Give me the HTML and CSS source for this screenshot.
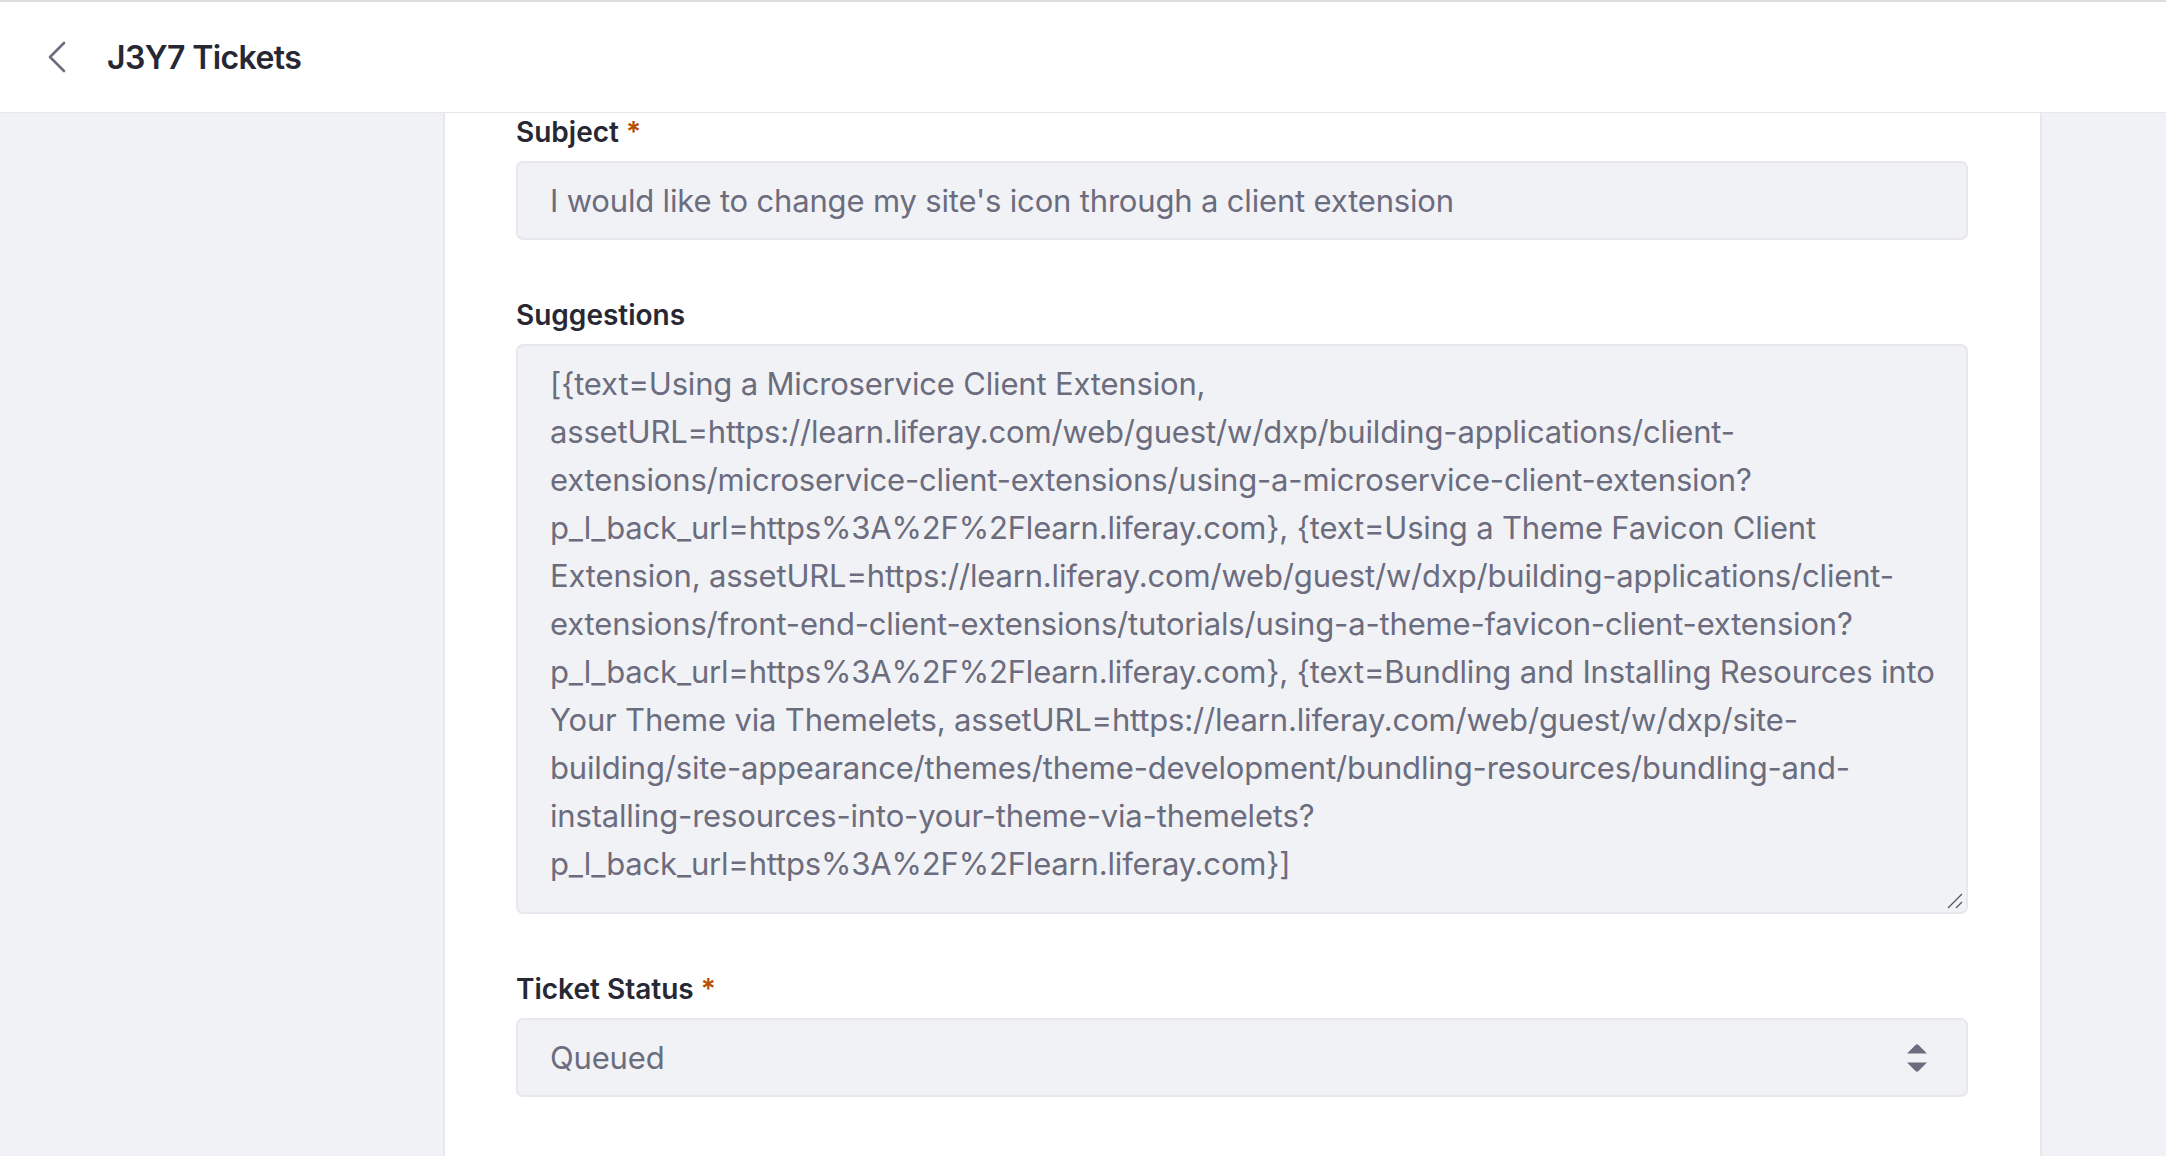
FILE: index.html
```html
<!DOCTYPE html>
<html lang="en">
<head>
<meta charset="utf-8">
<title>J3Y7 Tickets</title>
<link rel="stylesheet" href="styles.css">
</head>
<body>
<header class="topbar">
  <button class="back" aria-label="Back">
    <svg width="22" height="32" viewBox="0 0 22 32"><path d="M18 2 L4 16 L18 30" fill="none" stroke="#6b6c7e" stroke-width="2.6" stroke-linecap="round" stroke-linejoin="round"/></svg>
  </button>
  <h1 class="title">J3Y7 Tickets</h1>
</header>
<main class="layout">
  <div class="side"></div>
  <section class="card">
    <div class="form-group">
      <label class="label">Subject <span class="req">*</span></label>
      <div class="field">I would like to change my site's icon through a client extension</div>
    </div>
    <div class="form-group">
      <label class="label">Suggestions</label>
      <div class="field area">[{text=Using a Microservice Client Extension,<br>assetURL=https://learn.liferay.com/web/guest/w/dxp/building-applications/client-<br>extensions/microservice-client-extensions/using-a-microservice-client-extension?<br>p_l_back_url=https%3A%2F%2Flearn.liferay.com}, {text=Using a Theme Favicon Client<br>Extension, assetURL=https://learn.liferay.com/web/guest/w/dxp/building-applications/client-<br>extensions/front-end-client-extensions/tutorials/using-a-theme-favicon-client-extension?<br>p_l_back_url=https%3A%2F%2Flearn.liferay.com}, {text=Bundling and Installing Resources into<br>Your Theme via Themelets, assetURL=https://learn.liferay.com/web/guest/w/dxp/site-<br>building/site-appearance/themes/theme-development/bundling-resources/bundling-and-<br>installing-resources-into-your-theme-via-themelets?<br>p_l_back_url=https%3A%2F%2Flearn.liferay.com}]<svg class="grip" width="16" height="16" viewBox="0 0 16 16"><path d="M1 15 L15 1 M9 15 L15 9" stroke="#55565f" stroke-width="1.3" fill="none"/></svg></div>
    </div>
    <div class="form-group">
      <label class="label">Ticket Status <span class="req">*</span></label>
      <div class="field select">Queued<svg class="arrows" width="22" height="32" viewBox="0 0 22 32"><path d="M1 11.5 L9.5 3 Q11 1.6 12.5 3 L21 11.5 Z" fill="#6b6c7e"/><path d="M1 20.5 L21 20.5 L12.5 29 Q11 30.4 9.5 29 Z" fill="#6b6c7e"/></svg></div>
    </div>
  </section>
  <div class="side"></div>
</main>
</body>
</html>
```
FILE: styles.css
```css
* { box-sizing: border-box; }
html, body { margin: 0; padding: 0; }
body {
  font-family: Inter, "Noto Sans", "Liberation Sans", sans-serif;
  background: #f1f2f5;
  color: #272833;
  height: 1156px;
  overflow: hidden;
}
.topbar {
  height: 113px;
  background: #fff;
  border-top: 2px solid #dcdcdf;
  border-bottom: 1px solid #e7e7ed;
  display: flex;
  align-items: center;
  padding-left: 46px;
}
.back {
  border: 0;
  background: none;
  padding: 0;
  width: 22px;
  height: 32px;
  display: flex;
  margin-right: 39px;
}
.title {
  margin: 0;
  font-size: 32px;
  font-weight: 600;
  color: #272833;
  letter-spacing: -0.6px;
}
.layout {
  display: grid;
  grid-template-columns: 443px 1599px 1fr;
  height: 1043px;
}
.card {
  background: #fff;
  border-left: 2px solid #e7e7ed;
  border-right: 2px solid #e7e7ed;
  padding: 2px 72px 0 71px;
}
.form-group { margin-bottom: 58px; }
.label {
  display: block;
  font-size: 28px;
  line-height: 34px;
  font-weight: 600;
  color: #272833;
  margin-bottom: 12px;
}
.req { color: #b95000; }
.field {
  position: relative;
  background: #f1f2f5;
  border: 2px solid #e7e7ed;
  border-radius: 7px;
  height: 79px;
  display: flex;
  align-items: center;
  padding: 0 32px;
  font-size: 31px;
  letter-spacing: -0.17px;
  color: #6b6c7e;
  white-space: nowrap;
}
.area {
  display: block;
  height: 570px;
  padding: 14px 32px 0 32px;
  line-height: 48px;
  margin-top: 12px;
}
.grip { position: absolute; right: 3px; bottom: 3px; }
.select { justify-content: space-between; padding-right: 38px; }
.arrows { flex: none; }
```
